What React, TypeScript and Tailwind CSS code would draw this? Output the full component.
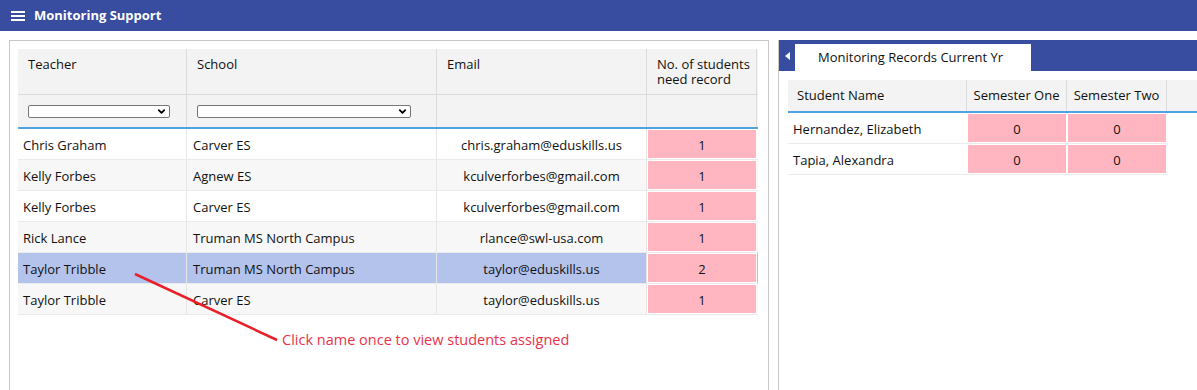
import { ChevronDown } from 'lucide-react'

const font = { fontFamily: '"Open Sans", "Noto Sans", Arial, sans-serif' }

interface TeacherRow {
  teacher: string
  school: string
  email: string
  count: number
}

const teachers: TeacherRow[] = [
  { teacher: 'Chris Graham', school: 'Carver ES', email: 'chris.graham@eduskills.us', count: 1 },
  { teacher: 'Kelly Forbes', school: 'Agnew ES', email: 'kculverforbes@gmail.com', count: 1 },
  { teacher: 'Kelly Forbes', school: 'Carver ES', email: 'kculverforbes@gmail.com', count: 1 },
  { teacher: 'Rick Lance', school: 'Truman MS North Campus', email: 'rlance@swl-usa.com', count: 1 },
  { teacher: 'Taylor Tribble', school: 'Truman MS North Campus', email: 'taylor@eduskills.us', count: 2 },
  { teacher: 'Taylor Tribble', school: 'Carver ES', email: 'taylor@eduskills.us', count: 1 },
]

const students = [
  { name: 'Hernandez, Elizabeth', one: 0, two: 0 },
  { name: 'Tapia, Alexandra', one: 0, two: 0 },
]

function FakeSelect({ width }: { width: string }) {
  return (
    <div className={`${width} h-[13px] border border-[#767676] rounded-[2px] bg-white flex items-center justify-end pr-[2px]`}>
      <ChevronDown size={11} strokeWidth={4} className="text-black" />
    </div>
  )
}

export default function App() {
  const selected = 4

  return (
    <div className="relative w-[1197px] h-[390px] overflow-hidden bg-white text-[13px] text-[#111]" style={font}>
      {/* Top bar */}
      <div className="h-[31px] bg-[#384ca0] flex items-center">
        <div className="ml-[11px] w-[14px] flex flex-col gap-[2px]">
          <span className="block h-[2px] bg-white" />
          <span className="block h-[2px] bg-white" />
          <span className="block h-[2px] bg-white" />
        </div>
        <span className="ml-[9px] text-white font-bold text-[13px]">Monitoring Support</span>
      </div>

      <div className="flex h-full">
        {/* Left panel */}
        <div className="ml-[9px] mt-[9px] w-[760px] h-full border border-[#c8c8c8] border-b-0 pl-[8px] pt-[8px]">
          <div className="w-[740px]">
            {/* header */}
            <div className="flex bg-[#f3f3f3] h-[46px] border-b border-[#dcdcdc]">
              <div className="w-[169px] border-r border-[#dcdcdc] pl-[10px] pt-[8px] leading-[15px]">Teacher</div>
              <div className="w-[250px] border-r border-[#dcdcdc] pl-[10px] pt-[8px] leading-[15px]">School</div>
              <div className="w-[210px] border-r border-[#dcdcdc] pl-[10px] pt-[8px] leading-[15px]">Email</div>
              <div className="w-[110px] border-r border-[#dcdcdc] pl-[10px] pt-[8px] leading-[15px]">No. of students need record</div>
            </div>
            <div className="flex bg-[#f3f3f3] h-[34px] border-b-[2px] border-[#4ea3e0]">
              <div className="w-[169px] border-r border-[#dcdcdc] pl-[10px] flex items-center">
                <FakeSelect width="w-[142px]" />
              </div>
              <div className="w-[250px] border-r border-[#dcdcdc] pl-[10px] flex items-center">
                <FakeSelect width="w-[214px]" />
              </div>
              <div className="w-[210px] border-r border-[#dcdcdc]" />
              <div className="w-[110px] border-r border-[#dcdcdc]" />
            </div>
            {/* rows */}
            {teachers.map((t, i) => {
              const bg = i === selected ? 'bg-[#b4c3ec]' : i % 2 === 1 ? 'bg-[#f7f7f7]' : 'bg-white'
              return (
                <div key={i} className={`flex h-[31px] border-b border-[#ebebeb] ${bg}`}>
                  <div className="w-[169px] border-r border-[#e6e6e6] pl-[5px] pt-[3px] flex items-center">{t.teacher}</div>
                  <div className="w-[250px] border-r border-[#e6e6e6] pl-[6px] pt-[3px] flex items-center">{t.school}</div>
                  <div className="w-[210px] border-r border-[#e6e6e6] pt-[3px] flex items-center justify-center">{t.email}</div>
                  <div className="w-[110px] p-[1px] bg-white">
                    <div className="h-full bg-[#ffb6c1] pt-[3px] flex items-center justify-center">{t.count}</div>
                  </div>
                </div>
              )
            })}
          </div>
        </div>

        {/* Right panel */}
        <div className="ml-[9px] mt-[9px] flex-1 h-full border-l border-[#c8c8c8]">
          <div className="h-[31px] bg-[#384ca0] flex items-end">
            <div className="w-[16px] h-full flex items-center justify-center">
              <svg width="5" height="8" viewBox="0 0 5 8">
                <path d="M5 0 L0 4 L5 8 Z" fill="white" />
              </svg>
            </div>
            <div className="w-[236px] h-[27px] bg-white pl-[23px] flex items-center font-medium text-[13px]">
              Monitoring Records Current Yr
            </div>
          </div>
          <div className="pl-[9px] pt-[9px]">
            <div className="flex h-[33px] bg-[#f3f3f3] border-b-[2px] border-[#4ea3e0] items-center">
              <div className="w-[179px] h-full border-r border-[#dcdcdc] pl-[9px] flex items-center">Student Name</div>
              <div className="w-[100px] h-full border-r border-[#dcdcdc] flex items-center justify-center">Semester One</div>
              <div className="w-[100px] h-full border-r border-[#dcdcdc] flex items-center justify-center">Semester Two</div>
              <div className="flex-1" />
            </div>
            {students.map((s, i) => (
              <div key={i} className="flex h-[31px] w-[379px] border-b border-[#ebebeb] bg-white">
                <div className="w-[179px] pl-[5px] pt-[3px] flex items-center">{s.name}</div>
                <div className="w-[100px] p-[1px]">
                  <div className="h-full bg-[#ffb6c1] pt-[3px] flex items-center justify-center">{s.one}</div>
                </div>
                <div className="w-[100px] p-[1px]">
                  <div className="h-full bg-[#ffb6c1] pt-[3px] flex items-center justify-center">{s.two}</div>
                </div>
              </div>
            ))}
          </div>
        </div>
      </div>

      {/* Annotation */}
      <svg className="absolute left-0 top-0 pointer-events-none" width="1197" height="390">
        <line x1="135" y1="274" x2="277" y2="340" stroke="#e8202a" strokeWidth="2.5" />
      </svg>
      <div className="absolute left-[282px] top-[330px] text-[14.5px] leading-[20px] text-[#e8334a]">
        Click name once to view students assigned
      </div>
    </div>
  )
}
